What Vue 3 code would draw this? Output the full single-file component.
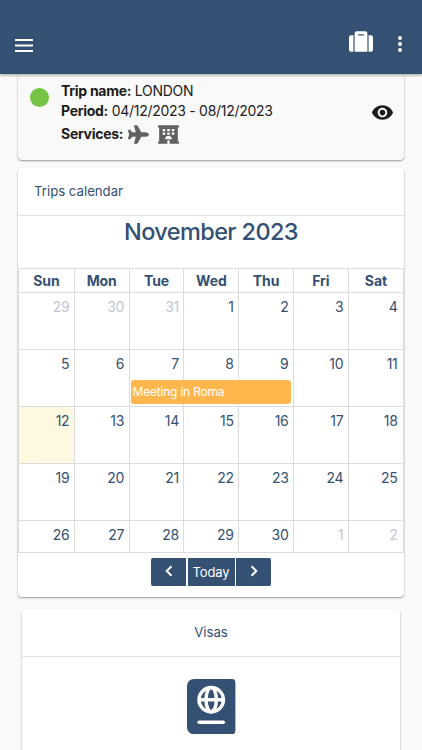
<template>
  <div class="app">
    <header class="toolbar">
      <button class="icon-btn" aria-label="Menu">
        <svg class="icon-menu" viewBox="0 0 18 13">
          <path d="M0 0h18v2H0zM0 5.5h18v2H0zM0 11h18v2H0z" />
        </svg>
      </button>
      <div class="toolbar-actions">
        <svg class="icon-suitcase" viewBox="0 0 24 21">
          <path d="M4.4 4.2H2a2 2 0 0 0-2 2v12.6a2 2 0 0 0 2 2h2.4zM19.6 4.2H22a2 2 0 0 1 2 2v12.6a2 2 0 0 1-2 2h-2.4z" />
          <path fill-rule="evenodd" d="M5.6 20.8V2.2a2 2 0 0 1 2-2h8.8a2 2 0 0 1 2 2v18.6zM9.2 3.2v1.2h5.6V3.2z" />
        </svg>
        <svg class="icon-dots" viewBox="0 0 4 16">
          <circle cx="2" cy="2" r="2" />
          <circle cx="2" cy="8" r="2" />
          <circle cx="2" cy="14" r="2" />
        </svg>
      </div>
    </header>

    <section class="card trip">
      <span class="status"></span>
      <div class="trip-info">
        <p><b>Trip name:</b> LONDON</p>
        <p><b>Period:</b> 04/12/2023 - 08/12/2023</p>
        <p class="services">
          <b>Services:</b>
          <svg class="icon-service" viewBox="0 0 576 512">
            <path d="M480 192H365.71L260.61 8.06A16.014 16.014 0 0 0 246.71 0h-65.5c-10.63 0-18.3 10.17-15.38 20.39L214.86 192H112l-43.2-57.6c-3.02-4.03-7.77-6.4-12.8-6.4H16.01C5.6 128-2.04 137.78.49 147.88L32 256 .49 364.12C-2.04 374.22 5.6 384 16.01 384H56c5.04 0 9.78-2.37 12.8-6.4L112 320h102.86l-49.03 171.6c-2.92 10.22 4.75 20.4 15.38 20.4h65.5c5.74 0 11.04-3.08 13.89-8.06L365.71 320H480c35.35 0 96-28.65 96-64s-60.65-64-96-64z" />
          </svg>
          <svg class="icon-service hotel" viewBox="0 0 576 512">
            <path d="M560 64c8.84 0 16-7.16 16-16V16c0-8.84-7.16-16-16-16H16C7.16 0 0 7.16 0 16v32c0 8.84 7.16 16 16 16h16v384H16c-8.84 0-16 7.16-16 16v32c0 8.84 7.16 16 16 16h240v-80c0-8.8 7.2-16 16-16h32c8.8 0 16 7.2 16 16v80h240c8.84 0 16-7.16 16-16v-32c0-8.84-7.16-16-16-16h-16V64z" />
            <path class="cutout" d="M128 102h70v64h-70zM253 102h70v64h-70zM378 102h70v64h-70zM128 200h70v64h-70zM253 200h70v64h-70zM378 200h70v64h-70zM192 384c0-53 43-92 96-92s96 39 96 92z" />
          </svg>
        </p>
      </div>
      <svg class="icon-eye" viewBox="0 0 24 24">
        <path d="M12 4.5C7 4.5 2.73 7.61 1 12c1.73 4.39 6 7.5 11 7.5s9.27-3.11 11-7.5c-1.73-4.39-6-7.5-11-7.5zM12 17c-2.76 0-5-2.24-5-5s2.24-5 5-5 5 2.24 5 5-2.24 5-5 5zm0-8c-1.66 0-3 1.34-3 3s1.34 3 3 3 3-1.34 3-3-1.34-3-3-3z" />
      </svg>
    </section>

    <section class="card calendar">
      <h2 class="card-title">Trips calendar</h2>
      <h1 class="month">November 2023</h1>
      <div class="grid">
        <div class="row head">
          <div v-for="name in weekdays" :key="name" class="cell">{{ name }}</div>
        </div>
        <div v-for="(week, w) in weeks" :key="w" class="row week">
          <div
            v-for="(day, d) in week"
            :key="d"
            class="cell"
            :class="{ other: isOther(w, day), today: day === 12 }"
          >
            {{ day }}
          </div>
          <div v-if="w === 1" class="event">Meeting in Roma</div>
        </div>
      </div>
      <div class="pager">
        <button aria-label="Previous">
          <svg viewBox="0 0 8 12"><path d="M6.5 1.2 1.7 6l4.8 4.8" /></svg>
        </button>
        <button class="today-btn">Today</button>
        <button aria-label="Next">
          <svg viewBox="0 0 8 12"><path d="M1.5 1.2 6.3 6l-4.8 4.8" /></svg>
        </button>
      </div>
    </section>

    <section class="card visas">
      <h2 class="card-title">Visas</h2>
      <svg class="icon-passport" viewBox="0 0 448 512">
        <path d="M64 0h352a32 32 0 0 1 32 32v448a32 32 0 0 1-32 32H64a64 64 0 0 1-64-64V64A64 64 0 0 1 64 0z" />
        <g class="globe">
          <circle cx="224" cy="192" r="113" />
          <ellipse cx="224" cy="192" rx="48" ry="112" />
          <path d="M112 192h224" />
          <path d="M112 400h224" stroke-linecap="round" />
        </g>
      </svg>
    </section>
  </div>
</template>

<script setup>
const weekdays = ['Sun', 'Mon', 'Tue', 'Wed', 'Thu', 'Fri', 'Sat']

const weeks = [
  [29, 30, 31, 1, 2, 3, 4],
  [5, 6, 7, 8, 9, 10, 11],
  [12, 13, 14, 15, 16, 17, 18],
  [19, 20, 21, 22, 23, 24, 25],
  [26, 27, 28, 29, 30, 1, 2]
]

// days that belong to the previous or next month
const isOther = (week, day) => (week === 0 && day > 20) || (week === 4 && day < 10)
</script>

<style>
body {
  margin: 0;
  background: #fafafa;
}
</style>

<style scoped>
.app {
  height: 750px;
  overflow: hidden;
  background: #fafafa;
  color: #345072;
  font-family: Inter, 'Liberation Sans', sans-serif;
  font-size: 14px;
}

.app * {
  box-sizing: border-box;
}

.toolbar {
  position: relative;
  z-index: 2;
  display: flex;
  justify-content: space-between;
  height: 74px;
  padding: 31px 20px 0 15px;
  background: #345072;
  box-shadow: 0 1px 3px rgba(0, 0, 0, 0.4);
}

.icon-btn {
  height: 13px;
  margin-top: 8px;
  padding: 0;
  border: none;
  background: none;
}

.toolbar svg {
  display: block;
  fill: #fff;
}

.icon-menu {
  width: 18px;
  height: 13px;
}

.toolbar-actions {
  display: flex;
  gap: 25px;
}

.icon-suitcase {
  width: 24px;
  height: 21px;
}

.icon-dots {
  width: 4px;
  height: 16px;
  margin-top: 5px;
}

.card {
  margin: 0 18px;
  border-radius: 4px;
  background: #fff;
  box-shadow: 0 1px 2px rgba(0, 0, 0, 0.4);
}

.trip {
  display: flex;
  height: 86px;
  padding: 7px 10px 0 12px;
  background: #f9f9f9;
  color: #1c1c1c;
}

.status {
  width: 19px;
  height: 19px;
  margin: 7px 12px 0 0;
  border-radius: 50%;
  background: #77c344;
}

.trip-info {
  flex: 1;
}

.trip-info p {
  margin: 0;
  line-height: 19.5px;
  letter-spacing: -0.28px;
  white-space: nowrap;
}

.trip-info b {
  font-weight: 700;
}

.trip-info .services {
  display: flex;
  align-items: center;
  height: 28px;
}

.icon-service {
  width: 21px;
  height: 19px;
  margin-left: 5px;
  fill: #616161;
}

.icon-service.hotel {
  margin-left: 9px;
}

.cutout {
  fill: #f9f9f9;
}

.icon-eye {
  width: 23px;
  height: 23px;
  margin-top: 19.5px;
  fill: #1c1c1c;
}

.calendar {
  height: 429px;
  margin-top: 8px;
}

.card-title {
  height: 48px;
  margin: 0;
  padding-left: 16px;
  border-bottom: 1px solid #e4e4e4;
  font-size: 13.2px;
  font-weight: 400;
  line-height: 47px;
}

.month {
  height: 52px;
  margin: 0;
  font-size: 23.5px;
  font-weight: 500;
  line-height: 32px;
  letter-spacing: -0.6px;
  text-align: center;
}

.grid {
  border: 1px solid #dcdcdc;
  border-top: none;
}

.row {
  position: relative;
  display: grid;
  grid-template-columns: repeat(6, 54.8px) 1fr;
  height: 57px;
  border-top: 1px solid #dcdcdc;
}

.row:last-child {
  height: 32px;
}

.row.head {
  height: 24px;
  font-weight: 700;
  line-height: 24px;
  letter-spacing: -0.1px;
  text-align: center;
}

.cell + .cell {
  border-left: 1px solid #dcdcdc;
}

.week .cell {
  padding: 4px 4.5px 0 0;
  line-height: 20px;
  letter-spacing: -0.3px;
  text-align: right;
}

.week .cell:nth-child(7) {
  padding-right: 5.5px;
}

.week .other {
  color: #c2c8d0;
}

.week .today {
  background: #fff8e0;
}

.event {
  position: absolute;
  top: 30px;
  left: 111.5px;
  width: 160px;
  height: 23.5px;
  padding-left: 2px;
  border-radius: 3px;
  background: #ffb74d;
  color: #fff;
  font-size: 12px;
  line-height: 23px;
  letter-spacing: -0.2px;
}

.pager {
  display: flex;
  justify-content: center;
  gap: 1.5px;
  margin-top: 5px;
}

.pager button {
  display: flex;
  align-items: center;
  justify-content: center;
  width: 35px;
  height: 28px;
  padding: 0;
  border: none;
  border-radius: 2px 0 0 2px;
  background: #345072;
  color: #fff;
  font: inherit;
}

.pager button:last-child {
  border-radius: 0 2px 2px 0;
}

.pager .today-btn {
  width: 47px;
  border-radius: 0;
  font-size: 13px;
  letter-spacing: -0.1px;
}

.pager svg {
  width: 8px;
  height: 12px;
  margin-bottom: 2px;
  fill: none;
  stroke: #fff;
  stroke-width: 2;
}

.visas {
  height: 200px;
  margin: 12px 22px 0;
  text-align: center;
}

.visas .card-title {
  padding: 0;
}

.icon-passport {
  width: 48.4px;
  height: 55.3px;
  margin-top: 21.5px;
  margin-left: 1px;
  fill: #345072;
}

.globe {
  fill: none;
  stroke: #fff;
  stroke-width: 32;
}
</style>
